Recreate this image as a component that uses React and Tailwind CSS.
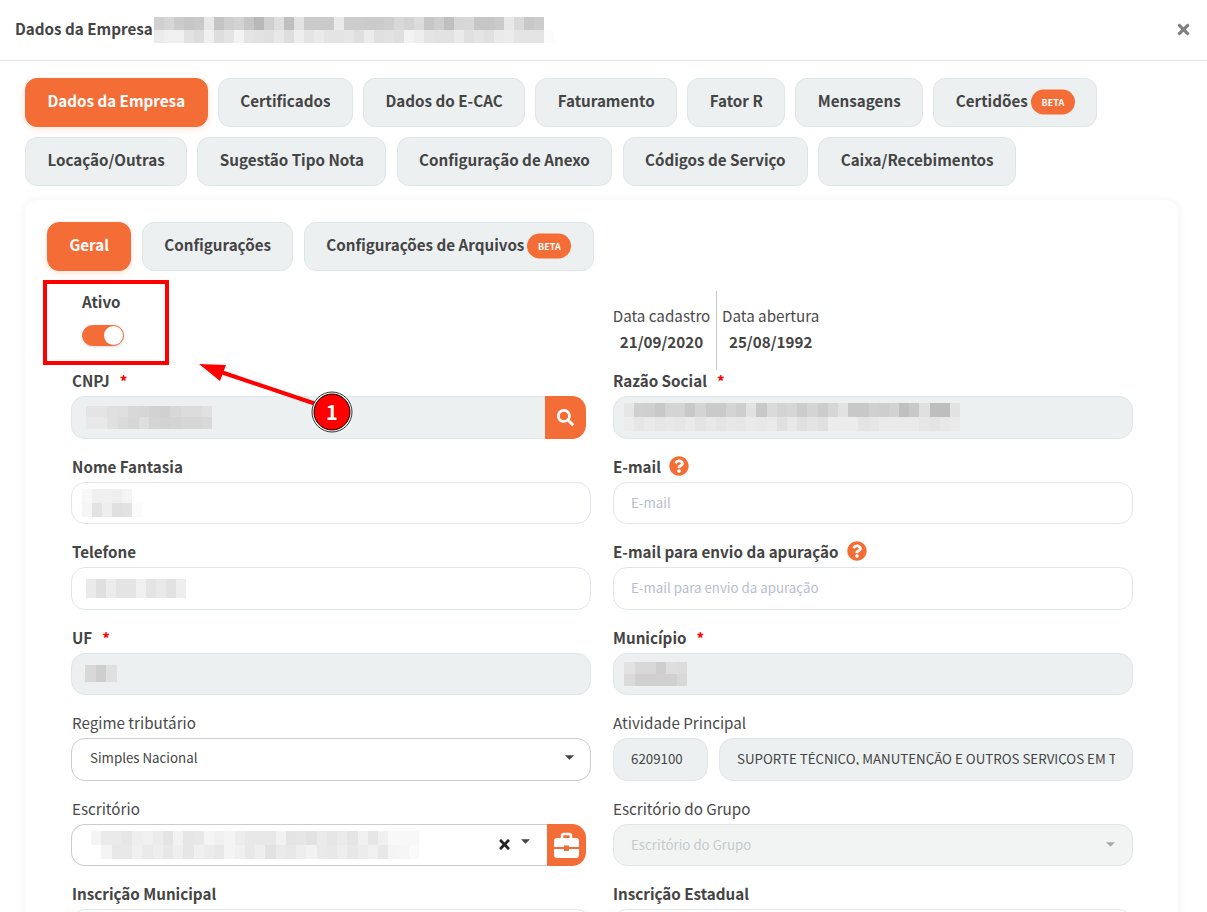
import React from "react";
import { FaTimes, FaSearch, FaQuestionCircle } from "react-icons/fa";

const g = (v) => `#${v}${v}${v}`;

function Pixels({ rows, cell, h }) {
  return (
    <div className="flex flex-col shrink-0">
      {rows.map((r, i) => (
        <div key={i} className="flex">
          {r.map((v, j) => (
            <div key={j} style={{ width: cell, height: h, background: g(v) }} />
          ))}
        </div>
      ))}
    </div>
  );
}

const blur = {
  title: [
    "d0 d6 cb c6 c9 e8 c4 ce d3 c6 b8 d0 de bf e2 ca ca ca ea cd cd cb cb ce d8 d3 dc c6 ce bf d6 d8 c6 c6 ca e8 da c8 cc".split(" "),
    "eb f0 f0 e2 dc f0 dd e4 f3 e4 e2 e0 e8 de ee e4 ea e4 e4 e6 e0 ec e0 e2 df f3 ee e4 e2 e2 ea e0 e4 e0 ea ec e4 e4 e4 fc".split(" "),
  ],
  cnpj: [
    "e4 e4 e0 de d8 d6 d2 d0 d8 dc dc e0".split(" "),
    "e8 e8 e0 da d6 de d4 d2 d4 d6 d6 d8".split(" "),
  ],
  razao: [
    "e6 d0 cf c8 d4 d4 c8 d4 ca ca d4 ce e2 c8 da d4 d6 cc d4 cc d6 e2 c8 c8 d0 ce d2 c0 c8 e0 be be e2".split(" "),
    "ec e6 ea e6 e8 e6 ea e4 e8 e4 e8 e6 ea e8 ea e0 e8 e0 e4 e0 ec ec ec e4 e6 ea ea ea ea e6 e4 e8 ea".split(" "),
  ],
  nome: ["f8 f0 f0 ee f4".split(" "), "f6 e2 ee e0 e2 fb".split(" ")],
  tel: ["ea df ec e4 e4 f0 e4 e9 e2 ee".split(" ")],
  uf: ["d8 ce e0".split(" ")],
  mun: ["e2 d8 d8 ce de dc".split(" "), "da d0 d0 d0 d0 d8".split(" ")],
  esc: [
    "f4 ea ea e6 ee f0 ec e4 f2 e6 e8 f4 f0 f4 ec e8 e8 e8 f2 e4 e6 e2 ea e6 ea e4 f0 e6 f0 f8 f8 f8".split(" "),
    "ff f4 e8 e8 f0 ea ee e8 ee e6 f0 ec e8 f4 f0 e8 ee e2 ea e8 ee f2 ea e8 ee e8 ec f0 e8 f4 f6 fa".split(" "),
  ],
};

function Beta() {
  return (
    <span className="ml-[3px] inline-flex h-[25px] w-[44px] translate-y-[1.5px] items-center justify-center rounded-full bg-[#f56d36] text-[9px] font-bold leading-none text-white">
      BETA
    </span>
  );
}

function Tab({ children, active, beta }) {
  return (
    <div
      className={`flex h-[49px] items-center rounded-[12px] border px-[21.4px] pb-[4px] text-[15.2px] font-bold leading-none ${
        active
          ? "border-[#f56d36] bg-[#f56d36] text-white shadow-[0_2px_6px_rgba(245,109,54,0.2)]"
          : "border-[#dfe6e9] bg-[#ecf0f1] text-[#444444]"
      }`}
    >
      <span>{children}</span>
      {beta && <Beta />}
    </div>
  );
}

function Label({ children, bold, required, help, left }) {
  return (
    <div
      className={`mb-[5px] flex h-[20px] items-center pb-[1.5px] text-[15.2px] leading-[20px] ${left ? "pl-px" : ""} ${
        bold ? "font-bold text-[#444444]" : "font-normal text-[#4a4a4a]"
      }`}
    >
      <span>{children}</span>
      {required && <span className="ml-[10px] text-[#ff0000]">*</span>}
      {help && <FaQuestionCircle className="ml-[8px] text-[20px] text-[#f56d36]" />}
    </div>
  );
}

function Caret({ color = "#444444" }) {
  return (
    <svg width="9" height="5" viewBox="0 0 10 5" className="shrink-0">
      <polygon points="0,0 10,0 5,5" fill={color} />
    </svg>
  );
}

function Briefcase() {
  return (
    <svg width="25" height="26" viewBox="0 0 25 26" fill="#ffffff">
      <path d="M8 7V4a2 2 0 0 1 2-2h5a2 2 0 0 1 2 2v3" fill="none" stroke="#ffffff" strokeWidth="2.5" />
      <path d="M0 9a3 3 0 0 1 3-3h19a3 3 0 0 1 3 3v6H15v-1.5h-5V15H0z" />
      <path d="M0 17h10v2h5v-2h10v6a3 3 0 0 1-3 3H3a3 3 0 0 1-3-3z" />
    </svg>
  );
}

function Input({ disabled, children, extra }) {
  return (
    <div
      className={`flex h-[42.5px] items-center rounded-[14px] border border-[#dfe6e9] px-[17px] pb-[1px] text-[13.3px] leading-none ${
        disabled ? "bg-[#ecf0f1] text-[#444444]" : "bg-white text-[#444444]"
      } ${extra || ""}`}
    >
      {children}
    </div>
  );
}

function Field({ label, bold, required, help, left, children }) {
  return (
    <div className="mb-[18px]">
      <Label bold={bold} required={required} help={help} left={left}>
        {label}
      </Label>
      {children}
    </div>
  );
}

export default function App() {
  const top1 = ["Certificados", "Dados do E-CAC", "Faturamento", "Fator R", "Mensagens"];
  const top2 = ["Locação/Outras", "Sugestão Tipo Nota", "Configuração de Anexo", "Códigos de Serviço", "Caixa/Recebimentos"];
  return (
    <div
      className="relative h-[912px] w-full overflow-hidden bg-white"
      style={{ fontFamily: '"Noto Sans CJK SC", "Noto Sans", sans-serif' }}
    >
      {/* header */}
      <div className="flex h-[61px] items-center justify-between border-b border-[#e3e5e6] pl-[15px] pr-[15px]">
        <div className="flex items-center">
          <span className="pb-[3px] text-[15.2px] font-bold leading-none text-[#444444]">Dados da Empresa</span>
          <div className="ml-px -mt-px">
            <Pixels rows={blur.title} cell={10} h={13} />
          </div>
        </div>
        <FaTimes className="-mt-[2px] text-[17px] text-[#808080]" />
      </div>

      {/* main tabs */}
      <div className="px-[25px] pt-[17px]">
        <div className="flex flex-col gap-y-[10px]">
          <div className="flex gap-x-[10.3px]">
            <Tab active>Dados da Empresa</Tab>
            {top1.map((t) => (
              <Tab key={t}>{t}</Tab>
            ))}
            <Tab beta>Certidões</Tab>
          </div>
          <div className="flex gap-x-[10.3px]">
            {top2.map((t) => (
              <Tab key={t}>{t}</Tab>
            ))}
          </div>
        </div>

        {/* card */}
        <div className="mt-[14px] w-[1153px] rounded-[12px] bg-white px-[22px] pt-[22px] shadow-[0_0_10px_rgba(0,0,0,0.06)]">
          <div className="flex gap-x-[10.5px]">
            <Tab active>Geral</Tab>
            <Tab>Configurações</Tab>
            <Tab beta>Configurações de Arquivos</Tab>
          </div>

          {/* form */}
          <div className="ml-[24px] grid w-[1062px] grid-cols-[520px_520px] gap-x-[22px]">
            <div className="h-[100px] pl-[11px] pt-[20px]">
              <div className="h-[20px] text-[15.2px] font-bold leading-[20px] text-[#444444]">Ativo</div>
              <div className="relative mt-[14px] h-[21px] w-[42px] rounded-full border border-[#f56d36] bg-[#f56d36] shadow-[0_1px_3px_rgba(0,0,0,0.15)]">
                <div className="absolute right-0 top-0 h-[19px] w-[19px] rounded-full bg-white" />
              </div>
            </div>
            <div className="flex h-[100px] pt-[20px] text-[15.2px] leading-[20px]">
              <div className="flex h-[79px] w-[104px] flex-col items-center border-r border-[#c8c8c8] pr-[6px] pt-[14px]">
                <div className="whitespace-nowrap font-normal text-[#4a4a4a]">Data cadastro</div>
                <div className="mt-[6px] font-bold text-[#444444]">21/09/2020</div>
              </div>
              <div className="flex h-[79px] flex-col items-center pl-[5px] pt-[14px]">
                <div className="whitespace-nowrap font-normal text-[#4a4a4a]">Data abertura</div>
                <div className="mt-[6px] font-bold text-[#444444]">25/08/1992</div>
              </div>
            </div>

            <Field label="CNPJ" bold required left>
              <div className="flex w-[515px]">
                <Input disabled extra="flex-1 rounded-r-none border-r-0 !px-[14px] !pb-0">
                  <Pixels rows={blur.cnpj} cell={10.5} h={11.5} />
                </Input>
                <div className="flex h-[42.5px] w-[41px] items-center justify-center rounded-r-[14px] bg-[#f56d36] text-white">
                  <FaSearch className="text-[17px]" />
                </div>
              </div>
            </Field>
            <Field label="Razão Social" bold required>
              <Input disabled extra="!px-[10px] !pb-0">
                <Pixels rows={blur.razao} cell={10.2} h={14} />
              </Input>
            </Field>

            <Field label="Nome Fantasia" bold left>
              <Input extra="!px-[10px] !pb-0">
                <Pixels rows={blur.nome} cell={10} h={14} />
              </Input>
            </Field>
            <Field label="E-mail" bold help>
              <Input>
                <span className="text-[#b9bdd0]">E-mail</span>
              </Input>
            </Field>

            <Field label="Telefone" bold left>
              <Input extra="!px-[14px] !pb-0">
                <Pixels rows={blur.tel} cell={10} h={19} />
              </Input>
            </Field>
            <Field label="E-mail para envio da apuração" bold help>
              <Input>
                <span className="text-[#b9bdd0]">E-mail para envio da apuração</span>
              </Input>
            </Field>

            <Field label="UF" bold required left>
              <Input disabled extra="!px-[13px] !pb-0">
                <Pixels rows={blur.uf} cell={10.5} h={17} />
              </Input>
            </Field>
            <Field label="Município" bold required>
              <Input disabled extra="!px-[10px] !pb-0">
                <Pixels rows={blur.mun} cell={10.5} h={12} />
              </Input>
            </Field>

            <Field label="Regime tributário" left>
              <Input extra="justify-between !border-[#c9cdd0] !pl-[18px] pr-[16px] !pb-[3px]">
                <span>Simples Nacional</span>
                <Caret />
              </Input>
            </Field>
            <Field label="Atividade Principal">
              <div className="flex gap-x-[11px]">
                <Input disabled extra="w-[95px] shrink-0">6209100</Input>
                <Input disabled extra="min-w-0 flex-1">
                  <div className="overflow-hidden whitespace-nowrap">
                    SUPORTE TÉCNICO, MANUTENÇÃO E OUTROS SERVIÇOS EM TECNOLOGIA DA INFORMAÇÃO
                  </div>
                </Input>
              </div>
            </Field>

            <Field label="Escritório" left>
              <div className="flex w-[515px]">
                <Input extra="flex-1 rounded-r-none border-r-0 !border-[#c9cdd0] !pl-[19px] !pr-[17px] !pb-0 justify-between">
                  <Pixels rows={blur.esc} cell={10.25} h={14} />
                  <div className="flex items-center gap-x-[9px]">
                    <FaTimes className="text-[15px] text-[#222222]" />
                    <div className="-mt-[6px]">
                      <Caret />
                    </div>
                  </div>
                </Input>
                <div className="flex h-[42.5px] w-[39px] items-center justify-center rounded-r-[14px] bg-[#f56d36] text-white">
                  <Briefcase />
                </div>
              </div>
            </Field>
            <Field label="Escritório do Grupo">
              <Input extra="justify-between !bg-[#f2f4f4] pr-[17px]">
                <span className="text-[#c5cbcb]">Escritório do Grupo</span>
                <Caret color="#aaaaaa" />
              </Input>
            </Field>

            <Field label="Inscrição Municipal" bold left>
              <Input />
            </Field>
            <Field label="Inscrição Estadual" bold>
              <Input />
            </Field>
          </div>
        </div>
      </div>

      {/* annotation overlay */}
      <div className="absolute left-[43px] top-[280px] h-[85px] w-[126px] border-[4px] border-[#ff0000]" />
      <svg className="absolute left-0 top-0" width="1207" height="912" style={{ pointerEvents: "none" }}>
        <line x1="316" y1="404" x2="218" y2="371" stroke="#ff0000" strokeWidth="4" />
        <polygon points="199,364 226,365 220,381" fill="#ff0000" />
        <circle cx="332" cy="412" r="20" fill="#ffffff" stroke="#333333" strokeWidth="1" />
        <circle cx="332" cy="412" r="18" fill="#ff0000" stroke="#000000" strokeWidth="1" />
      </svg>
      <div className="absolute left-[312px] top-[392px] flex h-[40px] w-[40px] items-center justify-center text-[20px] font-bold leading-none text-white">
        1
      </div>
    </div>
  );
}
